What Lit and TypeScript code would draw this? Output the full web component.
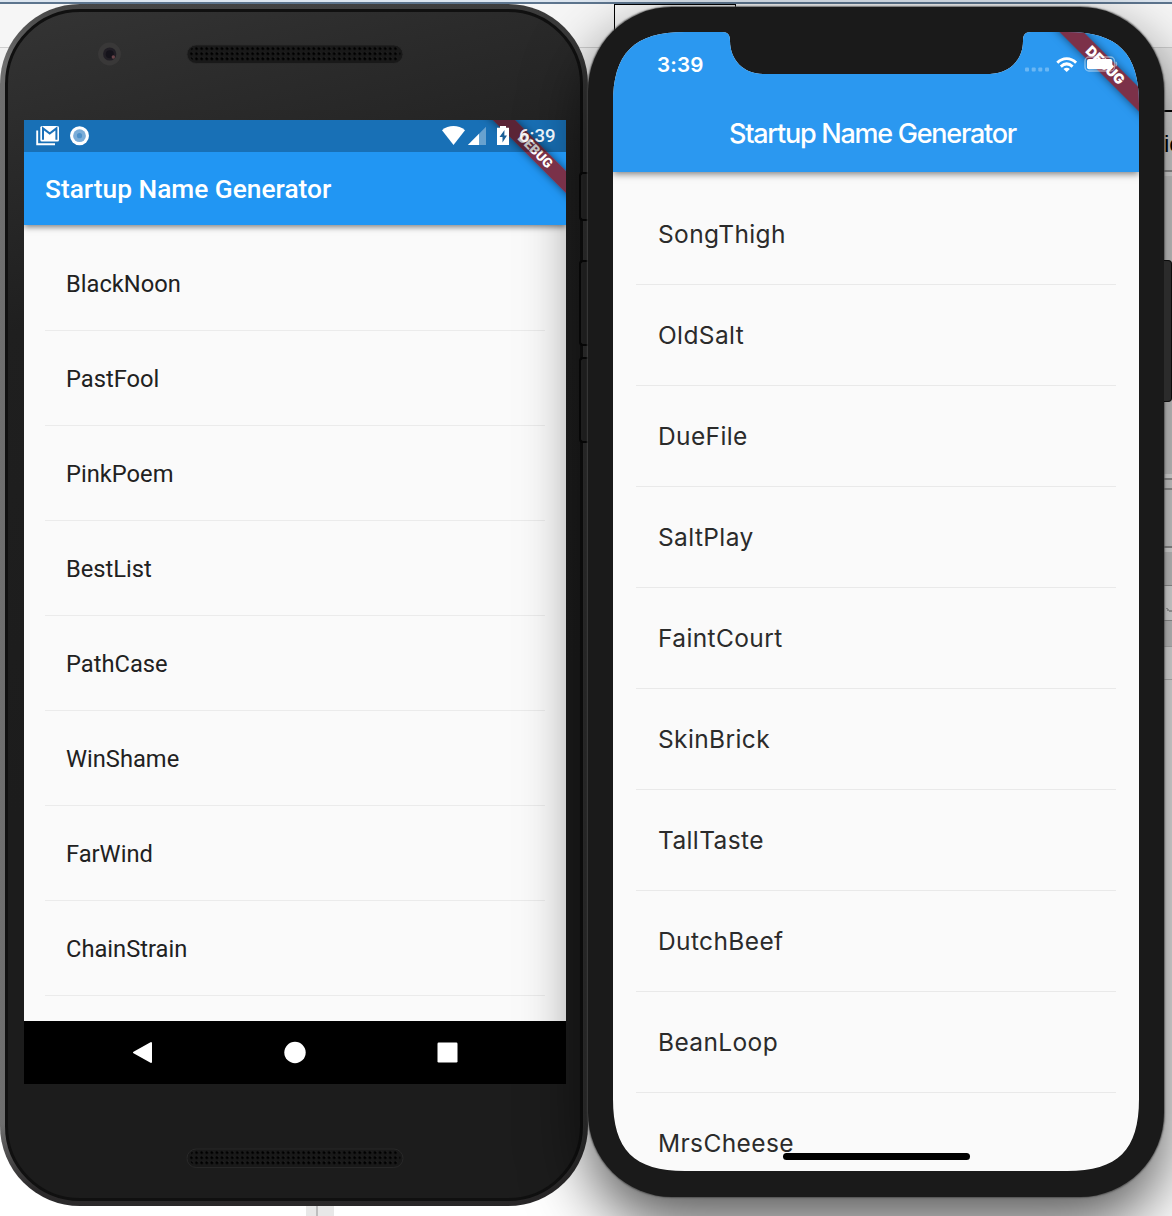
import { LitElement, html, css, svg } from "lit";
import { customElement, property } from "lit/decorators.js";

@customElement("debug-banner")
class DebugBanner extends LitElement {
  static styles = css`
    :host {
      position: absolute;
      top: 0;
      right: 0;
      width: 100px;
      height: 100px;
      overflow: hidden;
      pointer-events: none;
    }
    .band {
      position: absolute;
      left: var(--cx);
      top: var(--cy);
      width: 170px;
      height: var(--band);
      margin-left: -85px;
      margin-top: calc(var(--band) / -2);
      transform: rotate(45deg);
      background: rgba(140, 30, 40, 0.84);
      box-shadow: 0 0 9px rgba(0, 0, 0, 0.5);
      color: #fff;
      text-align: center;
      font-weight: 900;
      font-size: var(--size);
      line-height: var(--band);
    }
  `;
  render() {
    return html`<div class="band">DEBUG</div>`;
  }
}

@customElement("android-phone")
class AndroidPhone extends LitElement {
  @property({ type: Array }) names: string[] = [];

  static styles = css`
    :host {
      display: block;
      box-sizing: border-box;
      width: 588px;
      height: 1202px;
      padding: 5px;
      border-radius: 80px;
      background:
        linear-gradient(rgba(60, 60, 60, 0.7) 0, transparent 60px, transparent 1120px, rgba(38, 36, 37, 0.9) 1185px),
        linear-gradient(90deg, #6f6f6f 0, #5c5c5c 10%, #484848 60%, #363636 100%);
      position: relative;
      font-family: Roboto, sans-serif;
    }
    .rim {
      box-sizing: border-box;
      height: 100%;
      border: 3px solid #101010;
      border-radius: 75px;
      display: flex;
      flex-direction: column;
      align-items: flex-start;
      padding-left: 16px;
      background: linear-gradient(165deg, #343434 0, #2b2b2b 10%, #1f1f1f 24%, #1c1c1c 60%, #1c1c1c 100%);
    }
    .top,
    .chin {
      width: 542px;
      position: relative;
      flex: none;
    }
    .top {
      height: 108px;
    }
    .chin {
      flex: 1;
    }
    .top svg,
    .chin svg {
      display: block;
    }
    .screen {
      position: relative;
      width: 542px;
      height: 964px;
      flex: none;
      display: flex;
      flex-direction: column;
      background: linear-gradient(#2196f3 32px, #fafafa 32px);
      overflow: hidden;
    }
    .status {
      position: relative;
      z-index: 3;
      height: 32px;
      flex: none;
      display: flex;
      background: rgba(0, 0, 0, 0.25);
    }
    .icons {
      flex: none;
      width: 495px;
      height: 32px;
    }
    .clock {
      padding-top: 5px;
      color: rgba(255, 255, 255, 0.93);
      font-size: 18.6px;
      font-weight: 500;
      line-height: 23px;
    }
    .bar {
      height: 73px;
      flex: none;
      display: flex;
      align-items: center;
      padding-left: 21px;
      background: #2196f3;
      color: #fff;
      font-size: 26.3px;
      font-weight: 500;
      white-space: nowrap;
      box-shadow: 0 2px 6px rgba(0, 0, 0, 0.5);
      clip-path: inset(0 0 -20px 0);
      z-index: 1;
    }
    debug-banner {
      --cx: 68.7px;
      --cy: 31.3px;
      --band: 16px;
      --size: 13.4px;
      z-index: 2;
    }
    .list {
      flex: 1;
      padding: 11px 21px 0;
      overflow: hidden;
    }
    .row {
      box-sizing: border-box;
      height: 95px;
      border-bottom: 1px solid #ebebeb;
      padding: 2px 0 0 21px;
      display: flex;
      align-items: center;
      font-size: 23.7px;
      color: #212121;
    }
    .nav {
      height: 63px;
      flex: none;
      background: #000;
    }
    .nav svg {
      display: block;
    }
    .key {
      position: absolute;
      right: 0;
      width: 9px;
      box-sizing: border-box;
      border: 2px solid #090909;
      border-right: 0;
      border-radius: 4px 0 0 4px;
      background: #2a2a2a;
    }
    .k1 { top: 168px; height: 49px; }
    .k2 { top: 256px; height: 86px; }
    .k3 { top: 353px; height: 86px; }
  `;

  grille(y: number, id: string) {
    return svg`
      <defs><pattern id=${id} x="165" y=${y} width="5.1" height="5.1" patternUnits="userSpaceOnUse">
        <circle cx="2.5" cy="2.5" r="1.45" fill="#000"></circle>
        <path d="M3.4 1.2L4.2 2" stroke="#3c3c3c" stroke-width=".6"></path>
      </pattern></defs>
      <rect x="163" y=${y - 1} width="216" height="18.5" rx="9.2" fill="#191919" stroke="#2c2c2c" stroke-width=".8"></rect>
      <rect x="165.5" y=${y} width="211" height="15.6" rx="7.8" fill="url(#${id})"></rect>`;
  }

  render() {
    return html`
      <div class="rim">
        <div class="top">
          <svg width="542" height="108">
            <circle cx="85.5" cy="42" r="11.4" fill="#393838"></circle>
            <circle cx="85.7" cy="42" r="6.6" fill="#211e25"></circle>
            <circle cx="85.8" cy="42.3" r="4" fill="#15131b"></circle>
            <circle cx="89.3" cy="45" r="1.7" fill="#6b4449"></circle>
            ${this.grille(34, "g1")}
          </svg>
        </div>
        <div class="screen">
          <div class="status">
            <svg class="icons" width="495" height="32">
              <path d="M13.2 10.5V24.2H31" fill="none" stroke="#fff" stroke-width="1.9"></path>
              <path d="M18 6H33.5Q35 6 35 7.5V20Q35 21.5 33.5 21.5H17.8Q16.3 21.5 16.3 20V7.5Q16.3 6 18 6Z" fill="#fff"></path>
              <path d="M19 19.7V8.4L25.7 13.6L32.4 8.4V19.7" fill="none" stroke="#1a70b9" stroke-width="2"></path>
              <circle cx="55.5" cy="15.7" r="9.5" fill="#fff"></circle>
              <circle cx="55.5" cy="15.7" r="6.4" fill="#7badd8"></circle>
              <circle cx="55.5" cy="15.7" r="2.6" fill="#4c90c9"></circle>
              <path d="M418 10.3C424.5 4.7 434.5 4.7 441 10.3L429.5 25Z" fill="#fff"></path>
              <path d="M462 6.8V25H454.8V14Z" fill="#fff" opacity=".35"></path>
              <path d="M455 13.8V25H443.8Z" fill="#fff"></path>
              <path d="M476 6H482V7.8H485V25H473V7.8H476Z" fill="#fff"></path>
              <path d="M480.5 10L475.5 17H478.5V22.5L483 15.5H480.3Z" fill="#1a5f97"></path>
            </svg>
            <span class="clock">6:39</span>
          </div>
          <div class="bar">Startup Name Generator</div>
          <div class="list">${this.names.map((n) => html`<div class="row">${n}</div>`)}</div>
          <div class="nav">
            <svg width="542" height="63">
              <path d="M110 31.5L127 22V41Z" fill="#fff" stroke="#fff" stroke-width="2" stroke-linejoin="round"></path>
              <circle cx="271" cy="31.5" r="10.7" fill="#fff"></circle>
              <rect x="413.5" y="21.5" width="20" height="20" rx="1.2" fill="#fff"></rect>
            </svg>
          </div>
          <debug-banner></debug-banner>
        </div>
        <div class="chin"><svg width="542" height="100">${this.grille(66, "g2")}</svg></div>
      </div>
      <div class="key k1"></div>
      <div class="key k2"></div>
      <div class="key k3"></div>
    `;
  }
}

@customElement("ios-phone")
class IosPhone extends LitElement {
  @property({ type: Array }) names: string[] = [];

  static styles = css`
    :host {
      display: block;
      box-sizing: border-box;
      position: relative;
      width: 576px;
      height: 1190px;
      padding: 25px;
      border-radius: 84px;
      background: #1a1a1a;
      box-shadow: 0 0 1.5px 1px rgba(70, 70, 70, 0.75), 0 28px 64px rgba(0, 0, 0, 0.66);
      font-family: Inter, sans-serif;
    }
    .screen {
      position: relative;
      width: 526px;
      height: 1139px;
      display: flex;
      flex-direction: column;
      background: #fafafa;
      overflow: hidden;
      clip-path: path(
        "M0 72C0 21 21 0 72 0H109C115 0 117 3 117 9C117 28 131 42 150 42H377C396 42 410 28 410 9C410 3 412 0 418 0H454C505 0 526 21 526 72V1067C526 1118 505 1139 454 1139H72C21 1139 0 1118 0 1067Z"
      );
    }
    .header {
      height: 140px;
      flex: none;
      background: #2b98f0;
      color: #fff;
      box-shadow: 0 2px 7px rgba(0, 0, 0, 0.5);
      z-index: 1;
      display: flex;
      flex-direction: column;
    }
    .status {
      height: 62px;
      flex: none;
    }
    .icons {
      position: absolute;
      left: 0;
      top: 0;
      z-index: 3;
    }
    .clock {
      display: block;
      padding: 20px 0 0 44px;
      font-size: 20.6px;
      font-weight: 600;
      line-height: 26px;
      letter-spacing: 0.2px;
    }
    .title {
      height: 78px;
      display: flex;
      align-items: center;
      justify-content: center;
      padding-right: 7px;
      font-size: 27px;
      font-weight: 500;
      letter-spacing: -1.25px;
      white-space: nowrap;
    }
    debug-banner {
      --cx: 66.4px;
      --cy: 33.6px;
      --band: 17px;
      --size: 13.8px;
      z-index: 2;
    }
    .list {
      flex: 1;
      padding: 12px 23px 0;
    }
    .row {
      box-sizing: border-box;
      height: 101px;
      border-bottom: 1px solid #e9e9e9;
      padding-left: 22px;
      display: flex;
      align-items: center;
      font-size: 24.5px;
      letter-spacing: 0.38px;
      color: #2b2b2b;
    }
    .home {
      position: absolute;
      left: 170px;
      top: 1121px;
      width: 187px;
      height: 7px;
      border-radius: 4px;
      background: #000;
    }
    .key {
      position: absolute;
      left: 576px;
      top: 253px;
      width: 8px;
      height: 142px;
      box-sizing: border-box;
      border: 1px solid #0c0c0c;
      border-left: 0;
      border-radius: 0 4px 4px 0;
      background: #2b2b2b;
    }
  `;

  render() {
    return html`
      <div class="screen">
        <div class="header">
          <div class="status"><span class="clock">3:39</span></div>
          <div class="title">Startup Name Generator</div>
        </div>
        <div class="list">${this.names.map((n) => html`<div class="row">${n}</div>`)}</div>
        <div class="home"></div>
        <debug-banner></debug-banner>
        <svg class="icons" width="526" height="60">
          <g fill="#fff" opacity=".3">
            <rect x="412" y="35.5" width="4" height="4" rx="1"></rect>
            <rect x="418.7" y="35.5" width="4" height="4" rx="1"></rect>
            <rect x="425.3" y="35.5" width="4" height="4" rx="1"></rect>
            <rect x="432" y="35.5" width="4" height="4" rx="1"></rect>
          </g>
          <g fill="none" stroke="#fff" stroke-width="2.9">
            <path d="M444.3 30.7C449.7 25.2 457.7 25.2 463.1 30.7"></path>
            <path d="M447.8 34.6C451.5 31.2 455.9 31.2 459.6 34.6"></path>
          </g>
          <path d="M450.5 37.1C452.5 35.4 454.9 35.4 456.9 37.1L453.7 40Z" fill="#fff"></path>
          <rect x="472" y="25" width="29.5" height="14" rx="4" fill="none" stroke="#fff" stroke-width="1.3" opacity=".45"></rect>
          <rect x="474" y="27" width="25.3" height="10.2" rx="2" fill="#fff"></rect>
          <path d="M503 29.8Q504.8 32 503 34.3Z" fill="#fff" stroke="#fff" opacity=".45"></path>
        </svg>
      </div>
      <div class="key"></div>
    `;
  }
}

@customElement("app-root")
class AppRoot extends LitElement {
  static styles = css`
    :host {
      display: block;
      position: relative;
      width: 1172px;
      height: 1216px;
      overflow: hidden;
      background: #fff;
    }
    .desk {
      display: block;
    }
    android-phone {
      position: absolute;
      left: 0;
      top: 4px;
    }
    ios-phone {
      position: absolute;
      left: 588px;
      top: 7px;
    }
    .behind {
      position: absolute;
      left: 1164px;
      top: 130px;
      font: 24px/28px "Liberation Sans", sans-serif;
      color: #000;
    }
  `;

  render() {
    return html`
      <svg class="desk" width="1172" height="1216" shape-rendering="crispEdges">
        <rect width="1172" height="48" fill="#f6f6f6"></rect>
        <rect width="1172" height="2" fill="#dde6f0"></rect>
        <rect y="2" width="1172" height="2" fill="#5d758e"></rect>
        <rect y="48" width="1172" height="80" fill="#f2f2f2"></rect>
        <rect y="47" width="1172" height="1" fill="#cfcfcf"></rect>
        <rect x="614.5" y="4.5" width="121" height="60" fill="#f8f8f8" stroke="#000"></rect>
        <rect x="1150" y="48" width="22" height="62" fill="#e9e9e9"></rect>
        <rect x="1150" y="110" width="22" height="2" fill="#000"></rect>
        <rect x="1150" y="112" width="22" height="58" fill="#ececec"></rect>
        <rect x="1150" y="170" width="22" height="2" fill="#a0a0a0"></rect>
        <rect x="1150" y="172" width="22" height="4" fill="#f8f8f8"></rect>
        <rect x="1150" y="176" width="22" height="298" fill="#e4e4e4"></rect>
        <rect x="1150" y="474" width="22" height="4" fill="#fff"></rect>
        <rect x="1150" y="478" width="22" height="2" fill="#a8a8a8"></rect>
        <rect x="1150" y="480" width="22" height="8" fill="#eee"></rect>
        <rect x="1150" y="488" width="22" height="2" fill="#a8a8a8"></rect>
        <rect x="1150" y="490" width="22" height="56" fill="#ececec"></rect>
        <rect x="1150" y="546" width="22" height="2" fill="#a0a0a0"></rect>
        <rect x="1150" y="548" width="22" height="4" fill="#fff"></rect>
        <rect x="1150" y="552" width="22" height="33" fill="#e0e0e0"></rect>
        <rect x="1150" y="585" width="22" height="1" fill="#aaa"></rect>
        <rect x="1150" y="620" width="22" height="1" fill="#aaa"></rect>
        <rect x="1150" y="621" width="22" height="25" fill="#e0e0e0"></rect>
        <rect x="1150" y="646" width="22" height="1" fill="#ccc"></rect>
        <rect x="1150" y="679" width="22" height="1" fill="#ccc"></rect>
        <path d="M1167 608Q1168 612 1172 611" fill="none" stroke="#bbb" stroke-width="1.5"></path>
        <rect x="306" y="1200" width="28" height="16" fill="#e8e8e8"></rect>
        <rect x="316" y="1200" width="2" height="16" fill="#bebebe"></rect>
      </svg>
      <span class="behind">ic</span>
      <android-phone
        .names=${["BlackNoon", "PastFool", "PinkPoem", "BestList", "PathCase", "WinShame", "FarWind", "ChainStrain"]}
      ></android-phone>
      <ios-phone
        .names=${["SongThigh", "OldSalt", "DueFile", "SaltPlay", "FaintCourt", "SkinBrick", "TallTaste", "DutchBeef", "BeanLoop", "MrsCheese"]}
      ></ios-phone>
    `;
  }
}
